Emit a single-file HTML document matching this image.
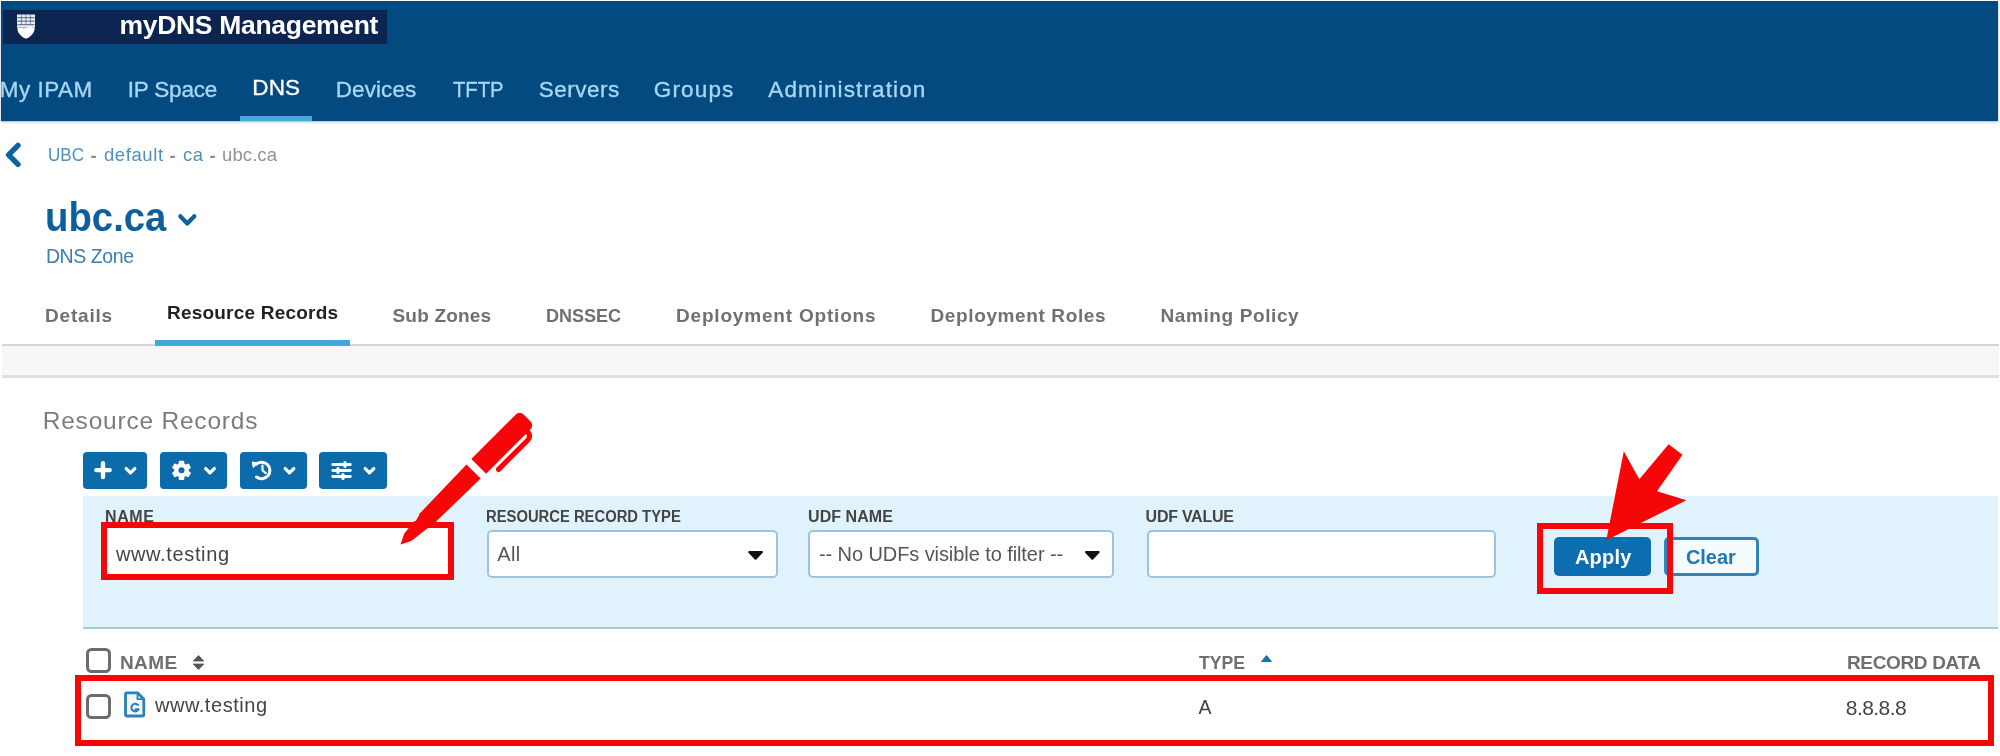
<!DOCTYPE html>
<html lang="en">
<head>
<meta charset="utf-8">
<title>myDNS Management</title>
<style>
html,body{margin:0;padding:0;}
body{width:2000px;height:756px;overflow:hidden;background:#ffffff;position:relative;font-family:"Liberation Sans",sans-serif;}
#w{position:absolute;left:0;top:0;width:2000px;height:756px;filter:blur(0.55px);}
.a{position:absolute;}
.t{position:absolute;white-space:pre;line-height:1;margin:0;padding:0;border:0;background:none;text-decoration:none;font-family:inherit;display:block;}
svg{position:absolute;overflow:visible;}
.btn{position:absolute;background:#0b6bab;border-radius:4px;top:452px;height:37px;}
.sel{position:absolute;background:#fff;border:2.200px solid #9cc4dd;border-radius:5px;box-sizing:border-box;top:529.700px;height:48.800px;}
.cb{position:absolute;box-sizing:border-box;border:3.200px solid #6c6c6c;border-radius:5.500px;background:#fff;width:25.500px;height:24.500px;}
.red{position:absolute;box-sizing:border-box;border:6.800px solid #f60606;}
</style>
</head>
<body>
<div id="w">
<!-- header -->
<div class="a" style="left:1.200px;top:1.300px;width:1997px;height:119.400px;background:#034a80;box-shadow:0 1px 2px rgba(0,40,80,.35);"></div>
<div class="a" style="left:3px;top:9.800px;width:384.200px;height:34px;background:#0c2450;"></div>
<div class="a" style="left:240px;top:116px;width:72px;height:5px;background:#4aa8e0;"></div>
<!-- shield -->
<svg style="left:16px;top:14px" width="20" height="25" viewBox="0 0 20 25">
 <path d="M1 0.500h18v13.200h-18z" fill="#e9edf2"/>
 <path d="M1.500 3.700h17M1.500 7.200h17M1.500 10.600h17" stroke="#0c2450" stroke-width="1.300" fill="none" opacity=".55"/>
 <path d="M5.500 1v9.500M10 1v9.500M14.500 1v9.500" stroke="#0c2450" stroke-width="1.100" fill="none" opacity=".4"/>
 <path d="M1.300 14.200C4 12.600 7 15 10 13.800S16 12.600 18.700 14.200C18.300 19.500 14.500 23 10 24.800C5.500 23 1.700 19.500 1.300 14.200z" fill="#ffffff"/>
</svg>
<!-- breadcrumb back chevron -->
<svg style="left:0;top:0" width="2000" height="756" viewBox="0 0 2000 756">
 <polyline points="18,145.300 8.600,154.800 18,164.300" fill="none" stroke="#0b64a2" stroke-width="5.400" stroke-linecap="round" stroke-linejoin="round"/>
 <polyline points="180.300,216.300 187.300,223.500 194.300,216.300" fill="none" stroke="#0b62a0" stroke-width="4.200" stroke-linecap="round" stroke-linejoin="round"/>
</svg>
<!-- tabs lines -->
<div class="a" style="left:1.5px;top:344px;width:1997px;height:2px;background:#d4d6d8;"></div>
<div class="a" style="left:1.5px;top:346px;width:1997px;height:30px;background:#f7f7f7;"></div>
<div class="a" style="left:1.5px;top:375.300px;width:1997px;height:2.400px;background:#e0e0e0;"></div>
<div class="a" style="left:155px;top:340px;width:195px;height:5.700px;background:#45a8db;"></div>
<!-- toolbar -->
<div class="btn" style="left:83px;width:64px;"></div>
<div class="btn" style="left:159.500px;width:67px;"></div>
<div class="btn" style="left:239.500px;width:67px;"></div>
<div class="btn" style="left:319px;width:68px;"></div>
<!-- filter panel -->
<div class="a" style="left:83px;top:496px;width:1915px;height:131px;background:#e0f2fb;border-bottom:2.600px solid #a3cad7;"></div>
<div class="sel" style="left:486.500px;width:291px;"></div>
<div class="sel" style="left:808px;width:305.500px;"></div>
<div class="sel" style="left:1147px;width:349px;"></div>
<!-- apply / clear -->
<div class="a" style="left:1554.200px;top:537px;width:97.200px;height:38.500px;background:#0c6eb0;border-radius:5px;"></div>
<div class="a" style="left:1664px;top:536.600px;width:95px;height:39px;background:#f6fbfe;border:3.200px solid #2f84bc;border-radius:5px;box-sizing:border-box;"></div>
<!-- name input + red boxes -->
<div class="a" style="left:104px;top:526px;width:348px;height:52px;background:#fff;"></div>
<div class="red" style="left:100.700px;top:522.300px;width:353.600px;height:58.200px;"></div>
<div class="red" style="left:1536.800px;top:522.500px;width:135.800px;height:71.300px;"></div>
<div class="red" style="left:74.600px;top:675px;width:1919.800px;height:71.300px;"></div>
<!-- checkboxes -->
<div class="cb" style="left:85.700px;top:648.300px;"></div>
<div class="cb" style="left:85.700px;top:694.200px;"></div>
<!-- icons layer -->
<svg style="left:0;top:0" width="2000" height="756" viewBox="0 0 2000 756">
 <!-- select arrows -->
 <path d="M749.200 552h12.800l-6.400 6.800z" fill="#111" stroke="#111" stroke-width="2" stroke-linejoin="round"/>
 <path d="M1085.900 552h12.800l-6.400 6.800z" fill="#111" stroke="#111" stroke-width="2" stroke-linejoin="round"/>
 <!-- sort icons -->
 <path d="M193.200 661l5.300-5.600 5.300 5.600zM193.200 664l5.300 5.600 5.300-5.600z" fill="#555" stroke="#555" stroke-width="0.800" stroke-linejoin="round"/>
 <path d="M1261.500 661.500l5-6 5 6z" fill="#1b74b0" stroke="#1b74b0" stroke-width="1" stroke-linejoin="round"/>
 <!-- toolbar icons -->
 <g fill="none" stroke="#fff" stroke-linecap="round" stroke-linejoin="round">
  <path d="M103 463.200v13.800M96.300 470.100h13.400" stroke-width="4.400"/>
  <polyline points="126.200,468.600 130.500,472.900 134.800,468.600" stroke-width="3.300"/>
  <polyline points="205.700,468.600 210,472.900 214.300,468.600" stroke-width="3.300"/>
  <polyline points="285.200,468.600 289.500,472.900 293.800,468.600" stroke-width="3.300"/>
  <polyline points="365.200,468.600 369.500,472.900 373.800,468.600" stroke-width="3.300"/>
 </g>
 <!-- gear -->
 <g transform="translate(181.500 470.300)">
  <g fill="#fff">
   <rect x="-2.800" y="-9.600" width="5.600" height="19.200" rx="1.200"/>
   <rect x="-2.800" y="-9.600" width="5.600" height="19.200" rx="1.200" transform="rotate(60)"/>
   <rect x="-2.800" y="-9.600" width="5.600" height="19.200" rx="1.200" transform="rotate(120)"/>
   <circle r="7.200"/>
  </g>
  <circle r="3" fill="#0b6bab"/>
 </g>
 <!-- history -->
 <g fill="none" stroke="#fff" stroke-linecap="round" stroke-linejoin="round">
  <path d="M255.800 464.500A8.300 8.300 0 1 1 256.500 477" stroke-width="3"/>
  <path d="M262.500 465.500v5l3.300 2.600" stroke-width="2.200"/>
 </g>
 <path d="M252.300 462l5.800 0.800-4.900 4.700z" fill="#fff" stroke="#fff" stroke-width="1" stroke-linejoin="round"/>
 <!-- sliders -->
 <g stroke="#fff" stroke-linecap="round" fill="none">
  <path d="M332.800 464.500h17.500M332.800 470.500h17.500M332.800 476.500h17.500" stroke-width="2.900"/>
  <path d="M345 462.500v4M338 468.500v4M343 474.500v4" stroke-width="3.200"/>
 </g>
 <!-- file icon -->
 <g fill="none" stroke="#2b80b9" stroke-linejoin="round" stroke-linecap="round">
  <path d="M127 692.800h10.500l6.300 6.300v15.400a1.500 1.500 0 0 1-1.500 1.500h-15.300a1.500 1.500 0 0 1-1.500-1.500v-20.200a1.500 1.500 0 0 1 1.500-1.500z" stroke-width="2.800" fill="#f2f8fc"/>
  <path d="M137.500 693v6.200h6" stroke-width="1.800"/>
  <path d="M138 705a3.800 3.800 0 1 0 0.600 4.300h-3" stroke-width="2.100"/>
 </g>
 <!-- red arrow -->
 <path d="M1606.300 540.200L1623.800 451.200L1639.300 479.200L1668.600 444.300L1682.500 454.800L1657 491.300L1686.400 500.300Z" fill="#f60606"/>
 <!-- pen -->
 <g transform="translate(400.500 544.500) rotate(-45)" fill="#f60606">
  <path d="M0 0L10.500 -5.200L26 -6.800L27.500 -5.800L36 -8.300L42 9L10 5.200Z"/>
  <path d="M34.500 -8.300L103.300 -10L103.300 10L41 9Z"/>
  <path d="M110.500 -10.400H173.500a5.500 5.500 0 0 1 5.500 5.500V5a5.500 5.500 0 0 1-5.500 5.500H110.500Z"/>
  <path d="M122.500 16.200H164a5.500 5.500 0 0 0 5.500-5.500V8" fill="none" stroke="#f60606" stroke-width="5.200" stroke-linecap="round"/>
 </g>
</svg>
<strong class="t" style="left:119.5px;top:12.4px;font-size:26.5px;font-weight:700;color:#ffffff;letter-spacing:-0.31px">myDNS Management</strong>
<a class="t" style="left:-0.2px;top:79.0px;font-size:22.5px;font-weight:400;color:#a9d6f4;letter-spacing:0.48px;-webkit-text-stroke:0.35px #a9d6f4">My IPAM</a>
<a class="t" style="left:127.8px;top:79.0px;font-size:22.5px;font-weight:400;color:#a9d6f4;letter-spacing:-0.20px;-webkit-text-stroke:0.35px #a9d6f4">IP Space</a>
<a class="t" style="left:252.3px;top:77.2px;font-size:22.5px;font-weight:400;color:#ffffff;letter-spacing:0.13px;-webkit-text-stroke:0.35px #ffffff">DNS</a>
<a class="t" style="left:335.8px;top:79.0px;font-size:22.5px;font-weight:400;color:#a9d6f4;letter-spacing:0.07px;-webkit-text-stroke:0.35px #a9d6f4">Devices</a>
<a class="t" style="left:453.3px;top:79.0px;font-size:22.5px;font-weight:400;color:#a9d6f4;letter-spacing:0.00px;transform:scaleX(0.8973);transform-origin:0 0;-webkit-text-stroke:0.35px #a9d6f4">TFTP</a>
<a class="t" style="left:538.8px;top:79.0px;font-size:22.5px;font-weight:400;color:#a9d6f4;letter-spacing:0.49px;-webkit-text-stroke:0.35px #a9d6f4">Servers</a>
<a class="t" style="left:653.8px;top:79.0px;font-size:22.5px;font-weight:400;color:#a9d6f4;letter-spacing:1.14px;-webkit-text-stroke:0.35px #a9d6f4">Groups</a>
<a class="t" style="left:768.3px;top:79.0px;font-size:22.5px;font-weight:400;color:#a9d6f4;letter-spacing:1.11px;-webkit-text-stroke:0.35px #a9d6f4">Administration</a>
<a class="t" style="left:48.0px;top:146.2px;font-size:18.5px;font-weight:400;color:#548fbc;letter-spacing:0.00px;transform:scaleX(0.9225);transform-origin:0 0">UBC</a>
<span class="t" style="left:90.5px;top:146.8px;font-size:18.5px;font-weight:700;color:#8c8c8c;letter-spacing:0.00px">-</span>
<a class="t" style="left:104.0px;top:146.2px;font-size:18.5px;font-weight:400;color:#548fbc;letter-spacing:0.58px">default</a>
<span class="t" style="left:169.5px;top:146.8px;font-size:18.5px;font-weight:700;color:#8c8c8c;letter-spacing:0.00px">-</span>
<a class="t" style="left:183.0px;top:146.2px;font-size:18.5px;font-weight:400;color:#548fbc;letter-spacing:0.49px">ca</a>
<span class="t" style="left:209.5px;top:146.8px;font-size:18.5px;font-weight:700;color:#8c8c8c;letter-spacing:0.00px">-</span>
<span class="t" style="left:222.0px;top:146.2px;font-size:18.5px;font-weight:400;color:#929292;letter-spacing:0.10px">ubc.ca</span>
<h1 class="t" style="left:44.8px;top:196.5px;font-size:40px;font-weight:700;color:#0b5f9c;letter-spacing:0.00px;transform:scaleX(0.9580);transform-origin:0 0">ubc.ca</h1>
<span class="t" style="left:45.9px;top:246.9px;font-size:19.5px;font-weight:400;color:#3b7fae;letter-spacing:-0.41px">DNS Zone</span>
<a class="t" style="left:45.0px;top:305.5px;font-size:19px;font-weight:700;color:#707070;letter-spacing:0.80px">Details</a>
<a class="t" style="left:167.0px;top:302.5px;font-size:19px;font-weight:700;color:#222222;letter-spacing:0.21px">Resource Records</a>
<a class="t" style="left:392.5px;top:305.5px;font-size:19px;font-weight:700;color:#707070;letter-spacing:0.18px">Sub Zones</a>
<a class="t" style="left:546.0px;top:305.5px;font-size:19px;font-weight:700;color:#707070;letter-spacing:0.00px;transform:scaleX(0.9483);transform-origin:0 0">DNSSEC</a>
<a class="t" style="left:676.0px;top:305.5px;font-size:19px;font-weight:700;color:#707070;letter-spacing:0.81px">Deployment Options</a>
<a class="t" style="left:930.5px;top:305.5px;font-size:19px;font-weight:700;color:#707070;letter-spacing:0.62px">Deployment Roles</a>
<a class="t" style="left:1160.5px;top:305.5px;font-size:19px;font-weight:700;color:#707070;letter-spacing:0.60px">Naming Policy</a>
<h2 class="t" style="left:42.7px;top:409.2px;font-size:24.5px;font-weight:400;color:#7a7c7e;letter-spacing:0.79px">Resource Records</h2>
<label class="t" style="left:105.1px;top:508.8px;font-size:16px;font-weight:700;color:#444444;letter-spacing:0.55px">NAME</label>
<label class="t" style="left:486.1px;top:508.8px;font-size:16px;font-weight:700;color:#444444;letter-spacing:0.00px;transform:scaleX(0.9243);transform-origin:0 0">RESOURCE RECORD TYPE</label>
<label class="t" style="left:808.1px;top:508.8px;font-size:16px;font-weight:700;color:#444444;letter-spacing:0.05px">UDF NAME</label>
<label class="t" style="left:1145.6px;top:508.8px;font-size:16px;font-weight:700;color:#444444;letter-spacing:-0.26px">UDF VALUE</label>
<span class="t" style="left:115.9px;top:544.0px;font-size:20px;font-weight:400;color:#444444;letter-spacing:0.65px">www.testing</span>
<span class="t" style="left:497.3px;top:543.5px;font-size:20px;font-weight:400;color:#555555;letter-spacing:0.38px">All</span>
<span class="t" style="left:818.9px;top:543.5px;font-size:20px;font-weight:400;color:#555555;letter-spacing:-0.08px">-- No UDFs visible to filter --</span>
<span class="t" style="left:1574.9px;top:547.0px;font-size:20px;font-weight:700;color:#ffffff;letter-spacing:0.23px">Apply</span>
<span class="t" style="left:1685.9px;top:547.0px;font-size:20px;font-weight:700;color:#2179b3;letter-spacing:-0.03px">Clear</span>
<b class="t" style="left:120.0px;top:653.0px;font-size:19px;font-weight:700;color:#6f6f6f;letter-spacing:0.38px">NAME</b>
<b class="t" style="left:1199.0px;top:653.0px;font-size:19px;font-weight:700;color:#6f6f6f;letter-spacing:0.00px;transform:scaleX(0.9288);transform-origin:0 0">TYPE</b>
<b class="t" style="left:1847.0px;top:653.0px;font-size:19px;font-weight:700;color:#6f6f6f;letter-spacing:-0.35px">RECORD DATA</b>
<span class="t" style="left:154.9px;top:695.0px;font-size:20px;font-weight:400;color:#444444;letter-spacing:0.55px">www.testing</span>
<span class="t" style="left:1198.5px;top:697.6px;font-size:19.5px;font-weight:400;color:#444444;letter-spacing:0.00px">A</span>
<span class="t" style="left:1845.8px;top:697.2px;font-size:21px;font-weight:400;color:#444444;letter-spacing:-0.55px">8.8.8.8</span>
</div>
</body>
</html>
